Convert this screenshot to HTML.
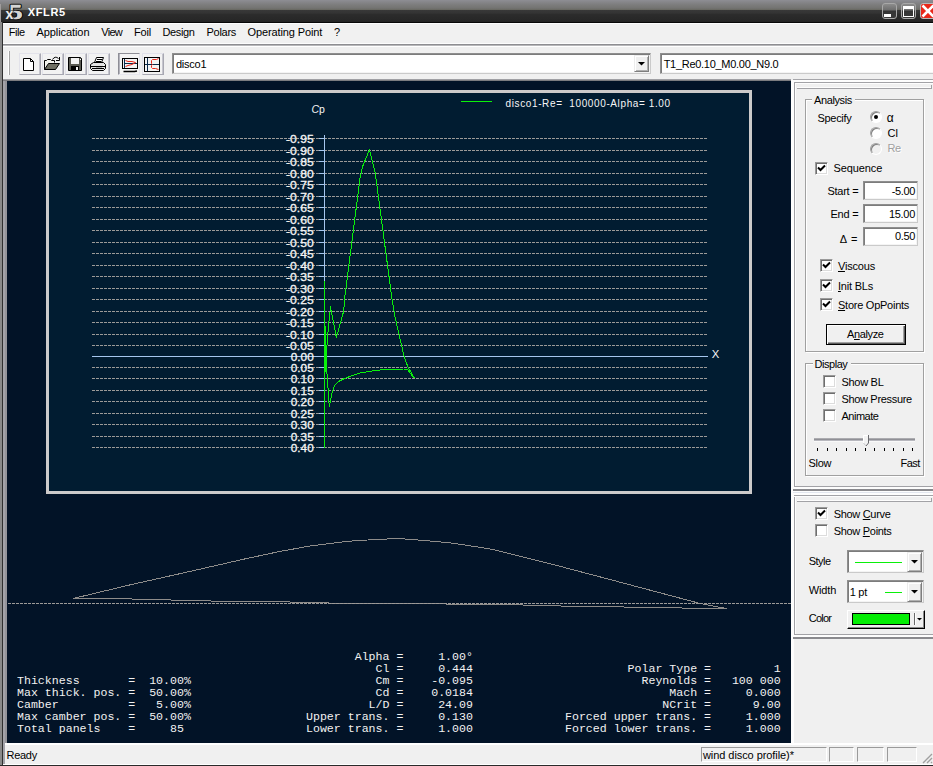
<!DOCTYPE html>
<html>
<head>
<meta charset="utf-8">
<title>XFLR5</title>
<style>
html,body{margin:0;padding:0;}
body{width:933px;height:766px;position:relative;overflow:hidden;background:#f0f0f0;font-family:"Liberation Sans",sans-serif;font-size:11px;color:#000;}
.a{position:absolute;}
.t{position:absolute;white-space:nowrap;line-height:13px;}
svg{position:absolute;left:0;top:0;}
.mono{position:absolute;font-family:"Liberation Mono",monospace;font-size:10px;line-height:12px;color:#f2f2f2;white-space:pre;margin:0;transform:scaleX(1.1589);transform-origin:0 0;}
.btn{position:absolute;top:53px;width:22px;height:22px;box-sizing:border-box;border:1px solid #e2e2ea;border-right-color:#a8a8b2;border-bottom-color:#a8a8b2;background:#f2f2f2;box-shadow:inset -1px 0 0 #c6c6ce;}
.btn.dn{border-color:#8e8e96 #e6e6ee #e6e6ee #8e8e96;background:#f4f4f4;box-shadow:inset 1px 0 0 #b4b4bc;}
.sunk{position:absolute;box-sizing:border-box;background:#fff;border:1px solid #8e8e8e;border-right-color:#cacaca;border-bottom-color:#cacaca;box-shadow:inset 1px 1px 0 #7c7c7c, inset -1px -1px 0 #f4f4f4;}
.cb{position:absolute;width:13px;height:13px;box-sizing:border-box;background:#fff;border:1px solid #9a9a9a;border-right-color:#fff;border-bottom-color:#fff;box-shadow:inset 1px 1px 0 #6e6e6e, inset -1px -1px 0 #dcdcdc;}
.rb{position:absolute;width:12px;height:12px;box-sizing:border-box;border-radius:50%;background:#fff;border:1px solid #a0a0a0;border-right-color:#fff;border-bottom-color:#fff;box-shadow:inset 1px 1px 0 #808080;}
.grp{position:absolute;box-sizing:border-box;border:1px solid #a0a0a0;box-shadow:1px 1px 0 #fff, inset 1px 1px 0 #fff;}
.ddb{position:absolute;box-sizing:border-box;background:#f0f0f0;border:1px solid #ececec;border-right-color:#7e7e7e;border-bottom-color:#7e7e7e;box-shadow:inset 1px 1px 0 #fff, inset -1px -1px 0 #b0b0b0;}
</style>
</head>
<body>
<div class="a" style="left:0;top:0;width:933px;height:23px;background:linear-gradient(#8e8e94 0px,#86868a 2px,#7c7c7c 5px,#747472 8px,#6a6a64 9.5px,#383838 10px,#343434 13px,#2c2c2c 14.5px,#262626 21px,#222 22px,#080808 22px,#080808 23px);"></div>
<svg width="30" height="23" viewBox="0 0 30 23"><text x="9" y="18.5" font-family="'Liberation Serif',serif" font-weight="bold" font-size="22" fill="#cfcfcf" stroke="#0c0c0c" stroke-width="2.4" stroke-linejoin="round" paint-order="stroke fill" textLength="13.5" lengthAdjust="spacingAndGlyphs">5</text><text x="9" y="18.5" font-family="'Liberation Serif',serif" font-weight="bold" font-size="22" fill="#d4d4d4" stroke="#d4d4d4" stroke-width="0.5" textLength="13.5" lengthAdjust="spacingAndGlyphs">5</text><text x="5.5" y="19.3" font-family="'Liberation Sans',sans-serif" font-weight="bold" font-size="14" fill="#ececec" stroke="#333" stroke-width="1.2" paint-order="stroke fill">x</text></svg>
<div class="t" style="letter-spacing:0.67px;left:27.70px;top:6px;color:#fff;font-weight:bold;">XFLR5</div>
<div class="a" style="left:882px;top:3px;width:15px;height:16px;box-sizing:border-box;border:1px solid #a8a8a8;border-radius:3px;background:linear-gradient(#8c8c8c 0,#6e6e6e 6px,#343434 7px,#3a3a3a 14px);"><div class="a" style="left:1px;top:10px;width:7px;height:3px;background:#fff"></div></div>
<div class="a" style="left:901px;top:3px;width:15px;height:16px;box-sizing:border-box;border:1px solid #a8a8a8;border-radius:3px;background:linear-gradient(#8c8c8c 0,#6e6e6e 6px,#343434 7px,#3a3a3a 14px);"><div class="a" style="left:1px;top:2px;width:11px;height:11px;box-sizing:border-box;border:1px solid #fff;border-top-width:3px"></div></div>
<div class="a" style="left:920px;top:3px;width:16px;height:16px;box-sizing:border-box;border:1px solid #b8b8b8;border-radius:3px;background:#e8281a;overflow:hidden"><svg width="14" height="14" viewBox="0 0 14 14" style="left:0;top:0"><path d="M1.5 1.5 L12.5 12.5 M12.5 1.5 L1.5 12.5" stroke="#fff" stroke-width="2.6"/></svg></div>
<div class="a" style="left:0px;top:4px;width:1px;height:18px;background:#a09c9c;"></div>
<div class="a" style="left:0px;top:22px;width:2px;height:744px;background:#8a8a8a;"></div>
<div class="a" style="left:2px;top:22px;width:1px;height:744px;background:#303030;"></div>
<div class="a" style="left:3px;top:23px;width:930px;height:1px;background:#fdfdfd;"></div>
<div class="a" style="left:3px;top:24px;width:930px;height:19px;background:#f1f1f1;"></div>
<div class="t" style="letter-spacing:-0.47px;left:8.70px;top:26px;">File</div>
<div class="t" style="letter-spacing:-0.08px;left:36.50px;top:26px;">Application</div>
<div class="t" style="letter-spacing:-0.68px;left:101.20px;top:26px;">View</div>
<div class="t" style="letter-spacing:-0.14px;left:134.00px;top:26px;">Foil</div>
<div class="t" style="letter-spacing:-0.39px;left:162.50px;top:26px;">Design</div>
<div class="t" style="letter-spacing:-0.28px;left:206.50px;top:26px;">Polars</div>
<div class="t" style="letter-spacing:-0.12px;left:247.50px;top:26px;">Operating Point</div>
<div class="t" style="left:334.00px;top:26px;">?</div>
<div class="a" style="left:3px;top:43px;width:930px;height:1px;background:#fdfdfd;"></div>
<div class="a" style="left:3px;top:44px;width:930px;height:1px;background:#8e8e92;"></div>
<div class="a" style="left:3px;top:45px;width:930px;height:1px;background:#b8b8ba;"></div>
<div class="a" style="left:3px;top:46px;width:930px;height:1px;background:#fff;"></div>
<div class="a" style="left:3px;top:47px;width:930px;height:32px;background:#f0f0f0;"></div>
<div class="a" style="left:8px;top:51px;width:1px;height:24px;background:#fff;"></div>
<div class="a" style="left:9px;top:51px;width:1px;height:24px;background:#a4a4a4;"></div>
<div class="btn" style="left:19px"><svg width="20" height="20" viewBox="0 0 20 20"><path d="M3.5 4.5 H10.5 L13.5 7.5 V16.5 H3.5 Z" fill="#fff" stroke="#000"/><path d="M10.5 4.5 V7.5 H13.5" fill="none" stroke="#000"/></svg></div>
<div class="btn" style="left:42px"><svg width="20" height="20" viewBox="0 0 20 20"><g transform="translate(-1,-1)"><path d="M2.5 16.5 V7.5 H4.5 L5.5 6.5 H8.5 L9.5 7.5 H12.5 V9.5" fill="#f4f4ee" stroke="#000"/><path d="M2.5 16.5 L6.5 10.5 H17.5 L13.5 16.5 Z" fill="#6e6e62" stroke="#000"/><path d="M10.5 6.5 Q13 2.5 16.5 5.5 M17.5 4 V7.5 H14" fill="none" stroke="#000"/></g></svg></div>
<div class="btn" style="left:65px"><svg width="20" height="20" viewBox="0 0 20 20"><path d="M2.5 3.5 H14.5 L15.5 4.5 V16.5 H2.5 Z" fill="#5a5a52" stroke="#000"/><rect x="5" y="4" width="8" height="6" fill="#f2f2f2"/><rect x="5" y="12" width="8" height="5" fill="#000"/><rect x="10" y="13" width="2" height="3" fill="#f2f2f2"/><rect x="14" y="5" width="1" height="1" fill="#fff"/></svg></div>
<div class="btn" style="left:88px"><svg width="20" height="20" viewBox="0 0 20 20"><path d="M5.5 8.5 L7.5 3.5 H14.5 L12.5 8.5" fill="#fff" stroke="#000"/><path d="M8 5.5 H13 M7 7.5 H12" stroke="#000"/><path d="M1.5 10.5 L4.5 8.5 H14.5 L16.5 10.5 V14.5 L14.5 16.5 H3.5 L1.5 14.5 Z" fill="#e4e4e4" stroke="#000"/><path d="M2 12.5 H16 M3 14.5 H15" stroke="#000"/><rect x="7" y="13" width="6" height="1" fill="#b0b0b0"/><rect x="14" y="11" width="1" height="1" fill="#fff"/></svg></div>
<div class="btn dn" style="left:118px"><svg width="20" height="20" viewBox="0 0 20 20"><rect x="3.5" y="4.5" width="15" height="10" fill="#f4f4f4" stroke="#000"/><path d="M5.5 5 V14" stroke="#0a2a4a"/><path d="M5 9.5 H18" stroke="#0a2a4a"/><path d="M6.5 6.5 L9 7.5 H13 L16.5 8.5 L13 10.5 L9 11.5 L6.5 12.5" fill="none" stroke="#e8281a"/><path d="M4.5 17.5 H15.5 L18 17" stroke="#000" stroke-width="1.6"/></svg></div>
<div class="btn" style="left:142px"><svg width="20" height="20" viewBox="1 0 20 20"><rect x="2.5" y="3.5" width="15" height="14" fill="#f4f4f4" stroke="#000"/><path d="M5.5 4 V17" stroke="#0a2a4a"/><path d="M3 10.5 H17" stroke="#0a2a4a"/><path d="M16.5 4.5 L14.5 5.5 H10.5 L9.5 6.5 V9.5 L10.5 10.5 L9.5 11.5 V13.5 L10.5 14.5 H13.5 L16.5 15.5" fill="none" stroke="#e8281a"/></svg></div>
<div class="sunk" style="left:172px;top:53px;width:479px;height:21px"></div>
<div class="t" style="letter-spacing:-0.26px;left:176.00px;top:58px;">disco1</div>
<div class="ddb" style="left:634px;top:55px;width:15px;height:17px"><svg width="13" height="15" viewBox="0 0 13 15"><path d="M3 6 H10 L6.5 9.5 Z" fill="#000"/></svg></div>
<div class="sunk" style="left:660px;top:53px;width:280px;height:21px"></div>
<div class="t" style="letter-spacing:-0.29px;left:663.70px;top:58px;">T1_Re0.10_M0.00_N9.0</div>
<div class="a" style="left:3px;top:79px;width:788px;height:1px;background:#a0a0a4;"></div>
<div class="a" style="left:3px;top:80px;width:788px;height:1px;background:#7c7c80;"></div>
<div class="a" style="left:3px;top:81px;width:2px;height:662px;background:#a2a2a8;"></div>
<div class="a" style="left:5px;top:81px;width:2px;height:662px;background:#94949a;"></div>
<div class="a" style="left:7px;top:81px;width:784px;height:662px;background:#021327;"></div>
<div class="a" style="left:3px;top:743px;width:930px;height:2px;background:#fff;"></div>
<div class="a" style="left:3px;top:745px;width:930px;height:19px;background:#f0f0f0;"></div>
<div class="a" style="left:3px;top:764px;width:930px;height:1px;background:#fff;"></div>
<div class="a" style="left:0px;top:765px;width:933px;height:1px;background:#2a2a2a;"></div>
<div class="a" style="left:3px;top:743px;width:2px;height:21px;background:#a4a4aa;"></div>
<div class="t" style="letter-spacing:-0.30px;left:6.60px;top:749px;">Ready</div>
<div class="a" style="left:701px;top:747px;width:126px;height:15px;box-sizing:border-box;border:1px solid #9a9a9a;border-right-color:#fff;border-bottom-color:#fff"></div>
<div class="a" style="left:829px;top:747px;width:25px;height:15px;box-sizing:border-box;border:1px solid #9a9a9a;border-right-color:#fff;border-bottom-color:#fff"></div>
<div class="a" style="left:857px;top:747px;width:27px;height:15px;box-sizing:border-box;border:1px solid #9a9a9a;border-right-color:#fff;border-bottom-color:#fff"></div>
<div class="a" style="left:887px;top:747px;width:30px;height:15px;box-sizing:border-box;border:1px solid #9a9a9a;border-right-color:#fff;border-bottom-color:#fff"></div>
<div class="t" style="letter-spacing:-0.07px;left:703.00px;top:749px;">wind disco profile)*</div>
<svg width="933" height="766" viewBox="0 0 933 766" style="pointer-events:none"><path d="M923 763 L932 754 M927 763 L932 758 M931 763 L932 762" stroke="#a0a0a0" stroke-width="1.4"/></svg>
<div class="a" style="left:46px;top:90px;width:706px;height:404px;box-sizing:border-box;border:3px solid #cccaca;background:#011c31;"></div>
<svg width="933" height="766" viewBox="0 0 933 766">
<g shape-rendering="crispEdges" fill="none">
<path d="M92 138.5 H708 M92 150.5 H708 M92 161.5 H708 M92 173.5 H708 M92 184.5 H708 M92 196.5 H708 M92 207.5 H708 M92 219.5 H708 M92 230.5 H708 M92 242.5 H708 M92 253.5 H708 M92 265.5 H708 M92 276.5 H708 M92 288.5 H708 M92 299.5 H708 M92 311.5 H708 M92 322.5 H708 M92 334.5 H708 M92 345.5 H708 M92 367.5 H708 M92 378.5 H708 M92 390.5 H708 M92 401.5 H708 M92 413.5 H708 M92 424.5 H708 M92 436.5 H708 M92 447.5 H708 " stroke="#9c9a98" stroke-width="1" stroke-dasharray="3 1"/>
<path d="M319 138.5 H325 M319 150.5 H325 M319 161.5 H325 M319 173.5 H325 M319 184.5 H325 M319 196.5 H325 M319 207.5 H325 M319 219.5 H325 M319 230.5 H325 M319 242.5 H325 M319 253.5 H325 M319 265.5 H325 M319 276.5 H325 M319 288.5 H325 M319 299.5 H325 M319 311.5 H325 M319 322.5 H325 M319 334.5 H325 M319 345.5 H325 M319 356.5 H325 M319 367.5 H325 M319 378.5 H325 M319 390.5 H325 M319 401.5 H325 M319 413.5 H325 M319 424.5 H325 M319 436.5 H325 M319 447.5 H325 " stroke="#a6c6ee" stroke-width="1"/>
<path d="M92 356.5 H708 M324.5 135 V448" stroke="#a6c6ee" stroke-width="1"/>
<path d="M461 101.5 H492" stroke="#0af00a" stroke-width="1"/>
<polyline points="414.4,378.3 407.5,366.0 404.0,356.0 395.0,317.0 392.0,299.0 375.3,173.4 369.5,149.5 362.8,166.0 360.1,177.6 344.6,298.7 343.7,311.0 336.4,337.5 330.5,307.0 328.5,325.6 326.8,347.6 325.6,371.4 325.0,330.0 324.5,282.0 324.5,448.0 324.5,300.0 325.3,340.0 326.1,363.0 327.6,381.5 329.3,407.0 331.9,393.4 334.4,385.8 338.6,381.5 345.4,378.1 360.0,373.0 374.5,370.6 386.4,369.3 404.0,369.0 407.6,369.8 414.4,378.3" stroke="#0af00a" stroke-width="1" stroke-linejoin="round"/>
<polyline points="73.0,598.5 130.0,584.9 195.0,570.3 245.0,558.9 280.0,551.4 302.0,547.5 306.7,546.5 313.9,545.5 322.1,544.5 330.1,543.5 338.0,542.5 346.1,541.5 357.9,540.5 377.2,539.5 397.3,538.5 411.8,539.5 424.0,540.5 435.7,541.5 446.2,542.5 454.8,543.5 461.3,544.5 467.7,545.5 474.7,546.5 481.2,547.5 487.6,548.5 494.0,549.7 555.0,565.0 610.0,579.5 699.0,603.2 726.0,608.5" stroke="#8e8c8a" stroke-width="1"/>
<path d="M73 598.5 H132 M132 599.5 H171 M171 600.5 H211 M211 601.5 H290 M290 602.5 H329 M329 603.5 H446 M446 604.5 H523 M523 605.5 H561 M561 606.5 H624 M624 607.5 H682 M682 608.5 H727" stroke="#8e8c8a" stroke-width="1"/>
<path d="M8 603.5 H791" stroke="#9c9a98" stroke-width="1" stroke-dasharray="3 1"/>
</g>
<g font-family="Liberation Sans,sans-serif" font-size="11" fill="#f6f6f6" stroke="#f6f6f6" stroke-width="0.3">
<text x="286.0" y="143" textLength="27.7" lengthAdjust="spacingAndGlyphs">-0.95</text>
<text x="286.0" y="155" textLength="27.7" lengthAdjust="spacingAndGlyphs">-0.90</text>
<text x="286.0" y="166" textLength="27.7" lengthAdjust="spacingAndGlyphs">-0.85</text>
<text x="286.0" y="178" textLength="27.7" lengthAdjust="spacingAndGlyphs">-0.80</text>
<text x="286.0" y="189" textLength="27.7" lengthAdjust="spacingAndGlyphs">-0.75</text>
<text x="286.0" y="201" textLength="27.7" lengthAdjust="spacingAndGlyphs">-0.70</text>
<text x="286.0" y="212" textLength="27.7" lengthAdjust="spacingAndGlyphs">-0.65</text>
<text x="286.0" y="224" textLength="27.7" lengthAdjust="spacingAndGlyphs">-0.60</text>
<text x="286.0" y="235" textLength="27.7" lengthAdjust="spacingAndGlyphs">-0.55</text>
<text x="286.0" y="247" textLength="27.7" lengthAdjust="spacingAndGlyphs">-0.50</text>
<text x="286.0" y="258" textLength="27.7" lengthAdjust="spacingAndGlyphs">-0.45</text>
<text x="286.0" y="270" textLength="27.7" lengthAdjust="spacingAndGlyphs">-0.40</text>
<text x="286.0" y="281" textLength="27.7" lengthAdjust="spacingAndGlyphs">-0.35</text>
<text x="286.0" y="293" textLength="27.7" lengthAdjust="spacingAndGlyphs">-0.30</text>
<text x="286.0" y="304" textLength="27.7" lengthAdjust="spacingAndGlyphs">-0.25</text>
<text x="286.0" y="316" textLength="27.7" lengthAdjust="spacingAndGlyphs">-0.20</text>
<text x="286.0" y="327" textLength="27.7" lengthAdjust="spacingAndGlyphs">-0.15</text>
<text x="286.0" y="339" textLength="27.7" lengthAdjust="spacingAndGlyphs">-0.10</text>
<text x="286.0" y="350" textLength="27.7" lengthAdjust="spacingAndGlyphs">-0.05</text>
<text x="290.8" y="361" textLength="22.9" lengthAdjust="spacingAndGlyphs">0.00</text>
<text x="290.8" y="372" textLength="22.9" lengthAdjust="spacingAndGlyphs">0.05</text>
<text x="290.8" y="383" textLength="22.9" lengthAdjust="spacingAndGlyphs">0.10</text>
<text x="290.8" y="395" textLength="22.9" lengthAdjust="spacingAndGlyphs">0.15</text>
<text x="290.8" y="406" textLength="22.9" lengthAdjust="spacingAndGlyphs">0.20</text>
<text x="290.8" y="418" textLength="22.9" lengthAdjust="spacingAndGlyphs">0.25</text>
<text x="290.8" y="429" textLength="22.9" lengthAdjust="spacingAndGlyphs">0.30</text>
<text x="290.8" y="441" textLength="22.9" lengthAdjust="spacingAndGlyphs">0.35</text>
<text x="290.8" y="452" textLength="22.9" lengthAdjust="spacingAndGlyphs">0.40</text>
</g>
<text x="311.5" y="113" font-family="Liberation Sans,sans-serif" font-size="10.5" fill="#f6f6f6"><tspan font-style="italic">C</tspan>p</text>
<text x="711.8" y="358" font-family="Liberation Sans,sans-serif" font-size="11.3" fill="#f6f6f6">X</text>
<text x="505.6" y="106.7" font-family="Liberation Sans,sans-serif" font-size="10" fill="#f6f6f6" textLength="164.5" lengthAdjust="spacing" xml:space="preserve">disco1-Re=  100000-Alpha= 1.00</text>
</svg>
<pre class="mono" style="left:17px;top:676px">Thickness       =  10.00%
Max thick. pos. =  50.00%
Camber          =   5.00%
Max camber pos. =  50.00%
Total panels    =     85</pre>
<pre class="mono" style="left:306px;top:652px">       Alpha =     1.00°
          Cl =     0.444
          Cm =    -0.095
          Cd =    0.0184
         L/D =     24.09
Upper trans. =     0.130
Lower trans. =     1.000</pre>
<pre class="mono" style="left:564.7px;top:664px">         Polar Type =         1
           Reynolds =   100 000
               Mach =     0.000
              NCrit =      9.00
Forced upper trans. =     1.000
Forced lower trans. =     1.000</pre>
<div class="a" style="left:791px;top:80px;width:3px;height:663px;background:#fdfdfd;"></div>
<div class="a" style="left:793px;top:79px;width:140px;height:1px;background:#a6a6aa;"></div>
<div class="a" style="left:793px;top:80px;width:140px;height:2px;background:#fdfdfd;"></div>
<div class="a" style="left:794px;top:82px;width:139px;height:1px;background:#a2a2a6;"></div>
<div class="a" style="left:795px;top:83px;width:138px;height:1px;background:#fdfdfd;"></div>
<div class="a" style="left:794px;top:82px;width:1px;height:405px;background:#a2a2a6;"></div>
<div class="a" style="left:795px;top:83px;width:1px;height:403px;background:#fdfdfd;"></div>
<div class="a" style="left:797px;top:87px;width:135px;height:1px;background:#fdfdfd;"></div>
<div class="a" style="left:797px;top:88px;width:135px;height:1px;background:#a2a2a6;"></div>
<div class="a" style="left:931px;top:85px;width:1px;height:4px;background:#a2a2a6;"></div>
<div class="a" style="left:794px;top:486px;width:139px;height:1px;background:#a2a2a6;"></div>
<div class="a" style="left:793px;top:487px;width:140px;height:2px;background:#fdfdfd;"></div>
<div class="a" style="left:793px;top:489px;width:140px;height:2px;background:#8a8a8e;"></div>
<div class="a" style="left:793px;top:491px;width:140px;height:1px;background:#fdfdfd;"></div>
<div class="a" style="left:793px;top:492px;width:140px;height:1px;background:#e2e6ee;"></div>
<div class="a" style="left:793px;top:493px;width:140px;height:2px;background:#fdfdfd;"></div>
<div class="a" style="left:794px;top:495px;width:139px;height:1px;background:#a2a2a6;"></div>
<div class="a" style="left:794px;top:496px;width:139px;height:1px;background:#fdfdfd;"></div>
<div class="a" style="left:794px;top:497px;width:1px;height:138px;background:#a2a2a6;"></div>
<div class="a" style="left:795px;top:497px;width:1px;height:137px;background:#fdfdfd;"></div>
<div class="a" style="left:797px;top:500px;width:135px;height:1px;background:#fdfdfd;"></div>
<div class="a" style="left:797px;top:501px;width:135px;height:1px;background:#a2a2a6;"></div>
<div class="a" style="left:931px;top:498px;width:1px;height:4px;background:#a2a2a6;"></div>
<div class="a" style="left:794px;top:634px;width:139px;height:1px;background:#a2a2a6;"></div>
<div class="a" style="left:793px;top:635px;width:140px;height:2px;background:#fdfdfd;"></div>
<div class="a" style="left:793px;top:637px;width:140px;height:2px;background:#8a8a8e;"></div>
<div class="grp" style="left:805px;top:99px;width:119px;height:253px"></div><div class="a" style="left:812px;top:98px;width:43.3px;height:4px;background:#f0f0f0;"></div><div class="t" style="letter-spacing:-0.38px;left:814.00px;top:94px;">Analysis</div>
<div class="grp" style="left:805px;top:363px;width:119px;height:113px"></div><div class="a" style="left:812.6px;top:362px;width:38.2px;height:4px;background:#f0f0f0;"></div><div class="t" style="letter-spacing:-0.48px;left:814.60px;top:358px;">Display</div>
<div class="t" style="letter-spacing:-0.30px;left:817.50px;top:112px;">Specify</div>
<div class="rb" style="left:870px;top:110.5px;"><div class="a" style="left:3px;top:3px;width:4px;height:4px;border-radius:50%;background:#000"></div></div>
<div class="t" style="left:886.80px;top:111px;font-size:12px;line-height:14px;">α</div>
<div class="rb" style="left:870px;top:126.5px;"></div>
<div class="t" style="left:887.50px;top:127px;">Cl</div>
<div class="rb" style="left:870px;top:142.5px;background:#f0f0f0;"></div>
<div class="t" style="letter-spacing:-0.56px;left:887.50px;top:142px;color:#a0a0a0;text-shadow:1px 1px 0 #fff;">Re</div>
<div class="cb" style="left:815px;top:162px"><svg width="11" height="11" viewBox="0 0 11 11" style="left:0;top:0"><path d="M2 4.5 L4.5 7 L9 2.5" fill="none" stroke="#000" stroke-width="2" stroke-linecap="butt" stroke-linejoin="miter"/></svg></div>
<div class="t" style="letter-spacing:-0.11px;left:833.50px;top:162px;">Sequence</div>
<div class="sunk" style="left:863px;top:181px;width:55px;height:19px"></div><div class="t" style="letter-spacing:-0.27px;left:827.50px;top:185px;">Start =</div><div class="t" style="letter-spacing:-0.37px;left:891.70px;top:185px;">-5.00</div>
<div class="sunk" style="left:863px;top:204px;width:55px;height:19px"></div><div class="t" style="letter-spacing:-0.24px;left:830.50px;top:208px;">End =</div><div class="t" style="letter-spacing:-0.31px;left:889.00px;top:208px;">15.00</div>
<div class="sunk" style="left:863px;top:227px;width:55px;height:19px"></div><div class="t" style="letter-spacing:0.74px;left:839.80px;top:233px;">Δ =</div><div class="t" style="letter-spacing:-0.37px;left:895.00px;top:230px;">0.50</div>
<div class="cb" style="left:820px;top:259px"><svg width="11" height="11" viewBox="0 0 11 11" style="left:0;top:0"><path d="M2 4.5 L4.5 7 L9 2.5" fill="none" stroke="#000" stroke-width="2" stroke-linecap="butt" stroke-linejoin="miter"/></svg></div>
<div class="t" style="letter-spacing:-0.19px;left:838.00px;top:260px;"><u>V</u>iscous</div>
<div class="cb" style="left:820px;top:279px"><svg width="11" height="11" viewBox="0 0 11 11" style="left:0;top:0"><path d="M2 4.5 L4.5 7 L9 2.5" fill="none" stroke="#000" stroke-width="2" stroke-linecap="butt" stroke-linejoin="miter"/></svg></div>
<div class="t" style="letter-spacing:-0.20px;left:838.00px;top:280px;"><u>I</u>nit BLs</div>
<div class="cb" style="left:820px;top:298px"><svg width="11" height="11" viewBox="0 0 11 11" style="left:0;top:0"><path d="M2 4.5 L4.5 7 L9 2.5" fill="none" stroke="#000" stroke-width="2" stroke-linecap="butt" stroke-linejoin="miter"/></svg></div>
<div class="t" style="letter-spacing:-0.25px;left:838.00px;top:299px;"><u>S</u>tore OpPoints</div>
<div class="a" style="left:826px;top:324px;width:80px;height:21px;box-sizing:border-box;border:1px solid #000;background:#f0f0f0;box-shadow:inset 1px 1px 0 #fff, inset -1px -1px 0 #5a5a5a, inset -2px -2px 0 #a0a0a0;"></div>
<div class="t" style="letter-spacing:-0.36px;left:847.00px;top:328px;">A<u>n</u>alyze</div>
<div class="cb" style="left:823px;top:375px"></div>
<div class="t" style="letter-spacing:-0.27px;left:841.40px;top:376px;">Show BL</div>
<div class="cb" style="left:823px;top:392px"></div>
<div class="t" style="letter-spacing:-0.32px;left:841.40px;top:393px;">Show Pressure</div>
<div class="cb" style="left:823px;top:409px"></div>
<div class="t" style="letter-spacing:-0.46px;left:841.40px;top:410px;">Animate</div>
<div class="a" style="left:814px;top:438px;width:101px;height:1px;background:#acacb0;"></div>
<div class="a" style="left:814px;top:439px;width:101px;height:1px;background:#909096;"></div>
<div class="a" style="left:814px;top:440px;width:101px;height:1px;background:#b8b8be;"></div>
<div class="a" style="left:814px;top:441px;width:101px;height:1px;background:#f8f8f8;"></div>
<svg width="933" height="766" viewBox="0 0 933 766"><path d="M863 435 H869 V443 L866 446.5 L863 443 Z" fill="#f2f2f2"/><path d="M863.5 443 V435.5 H868" stroke="#fff" fill="none"/><path d="M868.5 435 V443 L866 446" stroke="#6a6a6e" fill="none"/><path d="M863.5 443 L866 446" stroke="#c8c8cc" fill="none"/><rect x="817" y="448" width="1" height="3" fill="#000"/><rect x="827" y="448" width="1" height="3" fill="#000"/><rect x="836" y="448" width="1" height="3" fill="#000"/><rect x="846" y="448" width="1" height="3" fill="#000"/><rect x="855" y="448" width="1" height="3" fill="#000"/><rect x="865" y="448" width="1" height="3" fill="#000"/><rect x="874" y="448" width="1" height="3" fill="#000"/><rect x="884" y="448" width="1" height="3" fill="#000"/><rect x="893" y="448" width="1" height="3" fill="#000"/><rect x="903" y="448" width="1" height="3" fill="#000"/><rect x="912" y="448" width="1" height="3" fill="#000"/></svg>
<div class="t" style="letter-spacing:-0.31px;left:808.50px;top:457px;">Slow</div>
<div class="t" style="letter-spacing:-0.50px;left:900.50px;top:457px;">Fast</div>
<div class="cb" style="left:815px;top:507px"><svg width="11" height="11" viewBox="0 0 11 11" style="left:0;top:0"><path d="M2 4.5 L4.5 7 L9 2.5" fill="none" stroke="#000" stroke-width="2" stroke-linecap="butt" stroke-linejoin="miter"/></svg></div>
<div class="t" style="letter-spacing:-0.31px;left:833.70px;top:508px;">Show <u>C</u>urve</div>
<div class="cb" style="left:815px;top:524px"></div>
<div class="t" style="letter-spacing:-0.30px;left:833.70px;top:525px;">Show <u>P</u>oints</div>
<div class="t" style="letter-spacing:-0.49px;left:808.70px;top:555px;">Style</div>
<div class="sunk" style="left:847px;top:550px;width:77px;height:23px"></div>
<div class="a" style="left:855px;top:562px;width:47px;height:1px;background:#0af00a;"></div>
<div class="ddb" style="left:907px;top:552px;width:15px;height:20px"><svg width="13" height="18" viewBox="0 0 13 18" style="left:0;top:0"><path d="M3 7 H10 L6.5 10.5 Z" fill="#000"/></svg></div>
<div class="t" style="letter-spacing:-0.13px;left:808.70px;top:584px;">Width</div>
<div class="sunk" style="left:847px;top:580px;width:77px;height:23px"></div>
<div class="t" style="letter-spacing:-0.32px;left:849.80px;top:586px;">1 pt</div>
<div class="a" style="left:885px;top:592px;width:17px;height:1px;background:#0af00a;"></div>
<div class="ddb" style="left:907px;top:582px;width:15px;height:20px"><svg width="13" height="18" viewBox="0 0 13 18" style="left:0;top:0"><path d="M3 7 H10 L6.5 10.5 Z" fill="#000"/></svg></div>
<div class="t" style="letter-spacing:-0.75px;left:808.70px;top:612px;">Color</div>
<div class="a" style="left:847px;top:610px;width:78px;height:19px;box-sizing:border-box;border:1px solid #fff;border-right-color:#000;border-bottom-color:#000;background:#f0f0f0;box-shadow:inset -1px -1px 0 #8a8a8a;"></div>
<div class="a" style="left:852px;top:613px;width:58px;height:12px;box-sizing:border-box;border:1px solid #000;background:#05ee05"></div>
<div class="a" style="left:914px;top:613px;width:1px;height:12px;background:#6a6a6a;"></div>
<div class="a" style="left:915px;top:613px;width:1px;height:12px;background:#fff;"></div>
<svg width="933" height="766" viewBox="0 0 933 766"><path d="M917 618 H922 L919.5 620.5 Z" fill="#000"/></svg>
</body>
</html>
